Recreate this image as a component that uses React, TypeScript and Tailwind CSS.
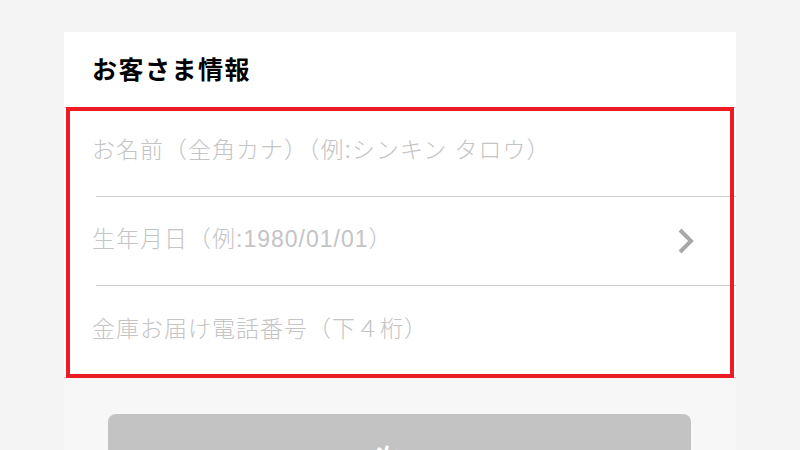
import React from 'react';

const fields = [
  { label: 'お名前（全角カナ）（例:シンキン タロウ）', arrow: false },
  { label: '生年月日（例:1980/01/01）', arrow: true },
  { label: '金庫お届け電話番号（下４桁）', arrow: false },
];

function Chevron() {
  return (
    <svg width="20" height="28" viewBox="0 0 20 28" fill="none">
      <polyline points="4,3 15,14 4,25" stroke="#a8a8a8" strokeWidth="4" strokeLinejoin="miter" />
    </svg>
  );
}

export default function App() {
  return (
    <div
      className="w-[800px] h-[450px] overflow-hidden bg-[#f4f4f4] pt-[32px]"
      style={{ fontFamily: '"Noto Sans CJK JP", "Noto Sans", sans-serif' }}
    >
      <div className="mx-auto w-[672px] h-[418px] bg-[#f7f7f7]">
        {/* タイトル */}
        <div className="h-[76px] bg-white border-b border-[#d8d8d8] pl-[28px] flex items-center">
          <h2 className="text-[25px] font-bold text-black tracking-[1.5px] -mt-[2px]">お客さま情報</h2>
        </div>

        {/* 入力欄 */}
        <div className="relative bg-white border-b border-[#d0d0d0]">
          {fields.map((f, i) => (
            <div key={f.label} className="pl-[32px]">
              <div
                className={
                  'flex items-center justify-between pr-[40px] ' +
                  (i < fields.length - 1 ? 'h-[89px] border-b border-[#cccccc]' : 'h-[91px]')
                }
              >
                <span
                  className="-ml-[4px] -mt-[4px] text-[23px] font-light text-[#c4c4c4] tracking-[1px] font-['Liberation_Sans','Noto_Sans_CJK_JP',sans-serif]"
                >
                  {f.label}
                </span>
                {f.arrow && <Chevron />}
              </div>
            </div>
          ))}
          <div className="absolute left-[2px] right-[2px] -top-[1px] -bottom-[1px] border-4 border-[#ed1c24] pointer-events-none" />
        </div>

        {/* ボタン */}
        <div className="pt-[36px] pl-[44px] pr-[45px]">
          <button className="w-full h-[84px] rounded-[8px] bg-[#c3c3c3] text-white text-[24px] font-bold">
            次へ
          </button>
        </div>
      </div>
    </div>
  );
}
